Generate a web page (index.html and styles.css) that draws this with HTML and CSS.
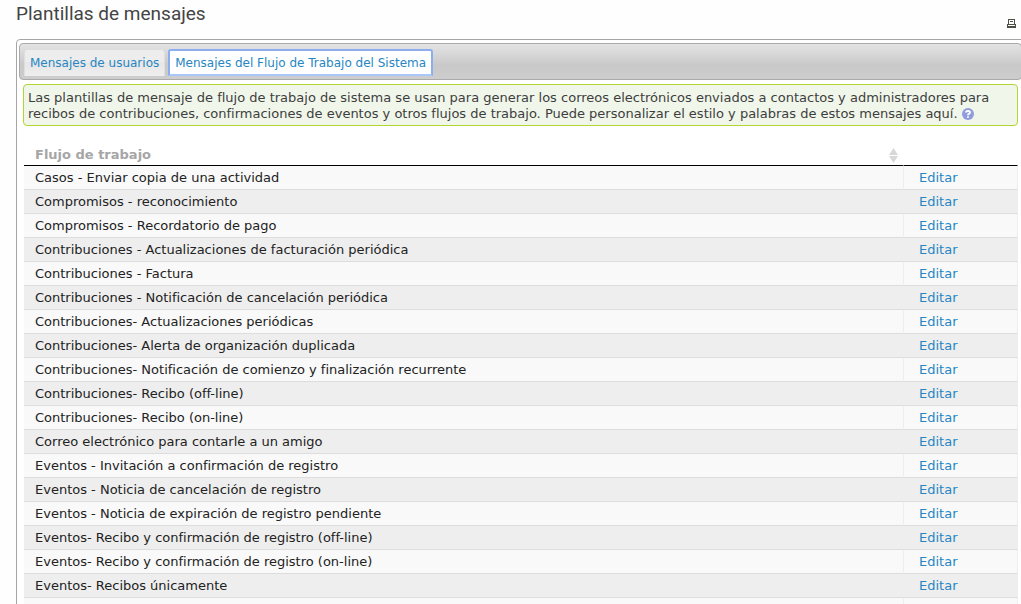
FILE: index.html
```html
<!DOCTYPE html>
<html lang="es">
<head>
<meta charset="utf-8">
<title>Plantillas de mensajes</title>
<link rel="stylesheet" href="styles.css">
</head>
<body>
<header class="page-head">
  <h1 class="page-title">Plantillas de mensajes</h1>
  <button class="print" type="button" aria-label="Imprimir">
    <svg width="9" height="9" viewBox="0 0 9 9" shape-rendering="crispEdges"><path fill="#4f4e45" fill-rule="evenodd" d="M1 0h7v5h1v4H0V5h1zM2 1v4h5V1zM3 2h3v1H3zM1 6v1h7V6z"/></svg>
  </button>
</header>
<main class="panel">
  <nav class="tabs">
    <a class="tab" href="#usuarios">Mensajes de usuarios</a>
    <a class="tab tab-active" href="#sistema">Mensajes del Flujo de Trabajo del Sistema</a>
  </nav>
  <section class="content">
    <p class="help">Las plantillas de mensaje de flujo de trabajo de sistema se usan para generar los correos electrónicos enviados a contactos y administradores para recibos de contribuciones, confirmaciones de eventos y otros flujos de trabajo. Puede personalizar el estilo y palabras de estos mensajes aquí. <a class="help-link" href="#ayuda" aria-label="Ayuda"><svg width="12" height="12" viewBox="0 0 12 12"><circle cx="6" cy="6" r="6" fill="#8f9ddd"/><path d="M4 4.6C4 2.4 8 2.4 8 4.5C8 5.8 6 5.8 6 7.2M6 8.3V9.8" fill="none" stroke="#fff" stroke-width="1.9"/></svg></a></p>
    <table class="list">
      <thead>
        <tr><th scope="col"><div class="sort">Flujo de trabajo<svg width="9" height="15" viewBox="0 0 9 15"><path fill="#d8d8d8" d="M4.500 0L9 7H0zM0 8h9L4.500 15z"/></svg></div></th><th class="action"></th></tr>
      </thead>
      <tbody>
        <tr><td>Casos - Enviar copia de una actividad</td><td class="action"><a href="#e1">Editar</a></td></tr>
        <tr><td>Compromisos - reconocimiento</td><td class="action"><a href="#e2">Editar</a></td></tr>
        <tr><td>Compromisos - Recordatorio de pago</td><td class="action"><a href="#e3">Editar</a></td></tr>
        <tr><td>Contribuciones - Actualizaciones de facturación periódica</td><td class="action"><a href="#e4">Editar</a></td></tr>
        <tr><td>Contribuciones - Factura</td><td class="action"><a href="#e5">Editar</a></td></tr>
        <tr><td>Contribuciones - Notificación de cancelación periódica</td><td class="action"><a href="#e6">Editar</a></td></tr>
        <tr><td>Contribuciones- Actualizaciones periódicas</td><td class="action"><a href="#e7">Editar</a></td></tr>
        <tr><td>Contribuciones- Alerta de organización duplicada</td><td class="action"><a href="#e8">Editar</a></td></tr>
        <tr><td>Contribuciones- Notificación de comienzo y finalización recurrente</td><td class="action"><a href="#e9">Editar</a></td></tr>
        <tr><td>Contribuciones- Recibo (off-line)</td><td class="action"><a href="#e10">Editar</a></td></tr>
        <tr><td>Contribuciones- Recibo (on-line)</td><td class="action"><a href="#e11">Editar</a></td></tr>
        <tr><td>Correo electrónico para contarle a un amigo</td><td class="action"><a href="#e12">Editar</a></td></tr>
        <tr><td>Eventos - Invitación a confirmación de registro</td><td class="action"><a href="#e13">Editar</a></td></tr>
        <tr><td>Eventos - Noticia de cancelación de registro</td><td class="action"><a href="#e14">Editar</a></td></tr>
        <tr><td>Eventos - Noticia de expiración de registro pendiente</td><td class="action"><a href="#e15">Editar</a></td></tr>
        <tr><td>Eventos- Recibo y confirmación de registro (off-line)</td><td class="action"><a href="#e16">Editar</a></td></tr>
        <tr><td>Eventos- Recibo y confirmación de registro (on-line)</td><td class="action"><a href="#e17">Editar</a></td></tr>
        <tr><td>Eventos- Recibos únicamente</td><td class="action"><a href="#e18">Editar</a></td></tr>
        <tr><td></td><td class="action"></td></tr>
      </tbody>
    </table>
  </section>
</main>
</body>
</html>
```
FILE: styles.css
```css
* { box-sizing: border-box; }
html { overflow: hidden; }
body {
  margin: 0;
  background: #fefefe;
  color: #3e3e3e;
  font: 13px/16px Verdana, "DejaVu Sans", sans-serif;
}
a { color: #2786c2; text-decoration: none; }
.page-head {
  display: flex;
  justify-content: space-between;
  align-items: flex-end;
  padding: 2px 5px 11px 16px;
}
.page-title {
  margin: 0 0 3px;
  font: 400 19px/23px Roboto, sans-serif;
  color: #444;
}
.print { display: flex; padding: 0; border: 0; background: none; }
.panel {
  margin: 0 -5px 0 16px;
  padding: 3px 3px 0 2px;
  border: 1px solid #a6a6a6;
  border-radius: 4px;
  background: #fff;
}
.tabs {
  display: flex;
  gap: 3px;
  padding: 5px 4px 3px;
  border: 1px solid #aaa;
  border-radius: 4px;
  background: linear-gradient(#e4e4e4, #c9c9c9 60%, #cdcdcd);
}
.tab {
  padding: 5px 5px 4px;
  border: 1px solid #dedede;
  border-bottom-color: #eee;
  border-radius: 3px 3px 0 0;
  background: linear-gradient(#ededed 50%, #e6e6e6 50%, #eee);
  font-size: 12px;
  line-height: 16px;
}
.tab-active { border: 2px solid #8caef0; border-bottom-color: #a9c7fb; background: #fff; padding: 4px 5px 3px; }
.content { padding: 4px 4px 0; }
.help {
  margin: 0;
  padding: 5px 4px 3px;
  border: 1px solid #b0d730;
  border-radius: 4px;
  background: #f0f6ea;
}
.help-link { display: inline-flex; vertical-align: -2px; }
.list {
  width: calc(100% - 1px);
  margin: 19px 0 0 1px;
  border-collapse: separate;
  border-spacing: 0;
  table-layout: fixed;
  color: #222;
}
th {
  padding: 2px 5px 2px 11px;
  border-bottom: 1px solid #000;
  color: #a6a6a6;
  text-align: left;
}
.sort { display: flex; align-items: center; justify-content: space-between; }
td {
  height: 24px;
  padding: 4px 11px 3px;
  border-bottom: 1px solid #ddd;
  background: #f9f9f9;
}
tr:nth-child(even) td { background: #eee; }
.action { width: 115px; padding-left: 15px; border-left: 1px solid #eee; border-right: 1px solid #eee; }
th.action { border-left-color: #fff; border-right-color: #fff; }
```
